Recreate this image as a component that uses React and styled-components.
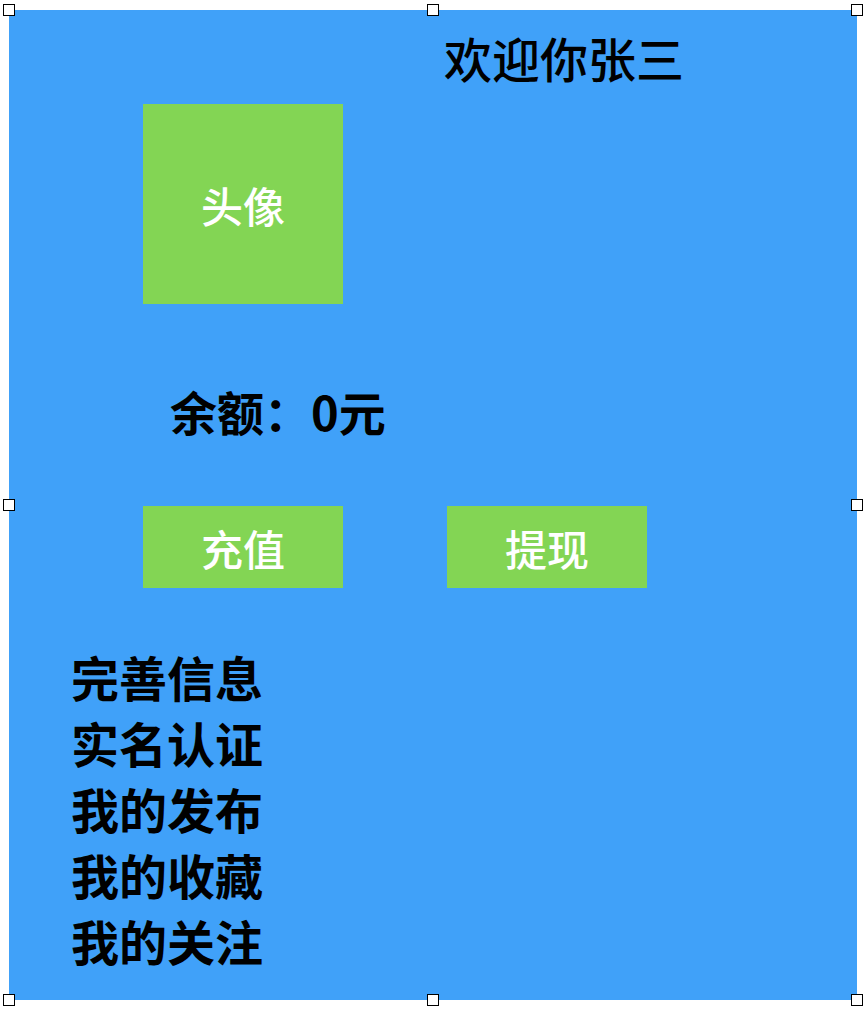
import React from 'react'
import styled, { createGlobalStyle } from 'styled-components'

const GlobalStyle = createGlobalStyle`
  html, body {
    margin: 0;
    padding: 0;
    background: #ffffff;
  }
  body {
    font-family: "Noto Sans CJK SC", "Noto Sans", sans-serif;
  }
`

const Stage = styled.div`
  padding: 10px 9px;
`

const Panel = styled.div`
  position: relative;
  box-sizing: border-box;
  width: 848px;
  height: 990px;
  padding-top: 17px;
  background: #40a1f9;
  display: flex;
  flex-direction: column;
  align-items: flex-start;
`

const Title = styled.h1`
  margin: 0 0 0 435px;
  font-size: 48px;
  line-height: 60px;
  font-weight: 500;
  color: #000;
  white-space: nowrap;
`

const Avatar = styled.div`
  margin: 17px 0 0 134px;
  width: 200px;
  height: 200px;
  background: #83d554;
  color: #fff;
  font-size: 42px;
  font-weight: 500;
  display: flex;
  align-items: center;
  justify-content: center;
`

const Balance = styled.div`
  margin: 77px 0 0 161px;
  font-size: 47px;
  line-height: 60px;
  font-weight: 700;
  color: #000;
  white-space: nowrap;
`

const Actions = styled.div`
  margin: 65px 0 0 134px;
  display: flex;
  gap: 104px;
`

const ActionButton = styled.button`
  width: 200px;
  height: 82px;
  border: none;
  padding: 0;
  background: #83d554;
  color: #fff;
  font-family: inherit;
  font-size: 42px;
  font-weight: 500;
  cursor: pointer;
`

const Menu = styled.ul`
  list-style: none;
  margin: 55px 0 0 62px;
  padding: 0;
`

const MenuItem = styled.li`
  font-size: 48px;
  line-height: 66px;
  font-weight: 700;
  color: #000;
`

const Handle = styled.span`
  position: absolute;
  box-sizing: border-box;
  width: 12px;
  height: 12px;
  background: #fff;
  border: 1.5px solid #000;
  left: ${p => p.$x - 6}px;
  top: ${p => p.$y - 6}px;
`

const handles = [
  [0, 0], [424, 0], [848, 0],
  [0, 495], [848, 495],
  [0, 990], [424, 990], [848, 990],
]

const menu = ['完善信息', '实名认证', '我的发布', '我的收藏', '我的关注']

const App = () => (
  <>
    <GlobalStyle />
    <Stage>
      <Panel>
        <Title>欢迎你张三</Title>
        <Avatar>头像</Avatar>
        <Balance>余额：0元</Balance>
        <Actions>
          <ActionButton>充值</ActionButton>
          <ActionButton>提现</ActionButton>
        </Actions>
        <Menu>
          {menu.map(item => (
            <MenuItem key={item}>{item}</MenuItem>
          ))}
        </Menu>
        {handles.map(([x, y]) => (
          <Handle key={`${x}-${y}`} $x={x} $y={y} />
        ))}
      </Panel>
    </Stage>
  </>
)

export default App
